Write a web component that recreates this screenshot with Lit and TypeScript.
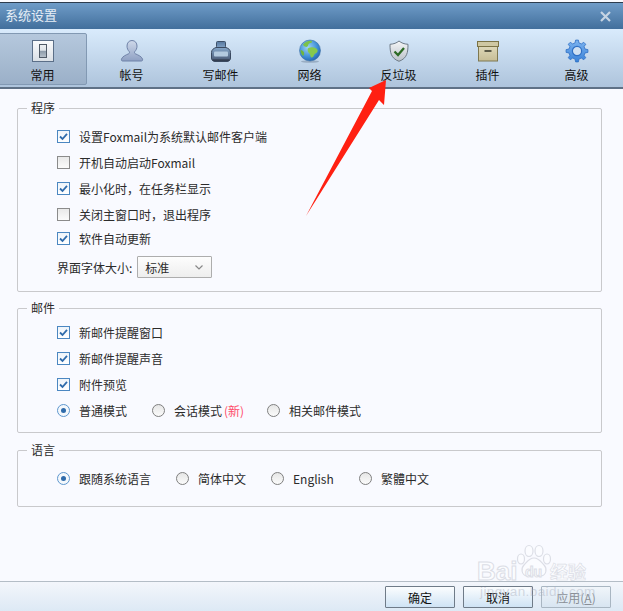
import { LitElement, html, css, svg } from "lit";
import { customElement } from "lit/decorators.js";

function gearPath(cx: number, cy: number, ro: number, ri: number, teeth: number) {
  const pts: string[] = [];
  const step = (Math.PI * 2) / teeth;
  for (let i = 0; i < teeth; i++) {
    const a = i * step - Math.PI / 2;
    const seq: [number, number][] = [
      [a - step * 0.3, ri],
      [a - step * 0.16, ro],
      [a + step * 0.16, ro],
      [a + step * 0.3, ri],
    ];
    for (const [t, r] of seq) pts.push(`${(cx + r * Math.cos(t)).toFixed(2)} ${(cy + r * Math.sin(t)).toFixed(2)}`);
  }
  return "M" + pts.join("L") + "Z";
}

const icons: Record<string, unknown> = {
  general: svg`
    <defs><linearGradient id="g1" x1="0" y1="0" x2="0" y2="1"><stop offset="0" stop-color="#fbfcfd"/><stop offset="1" stop-color="#d9dfe5"/></linearGradient>
    <linearGradient id="g1b" x1="0" y1="0" x2="0" y2="1"><stop offset="0" stop-color="#eef1f3"/><stop offset=".45" stop-color="#dfe4e8"/><stop offset=".5" stop-color="#8b9aa8"/><stop offset="1" stop-color="#b9c3cc"/></linearGradient></defs>
    <rect x="1.5" y="1.5" width="21" height="21" fill="url(#g1)" stroke="#5b6f88"/>
    <rect x="8.5" y="5.5" width="7" height="13" fill="url(#g1b)" stroke="#4f5a66"/>`,
  account: svg`
    <defs><linearGradient id="g2" x1="0" y1="0" x2="0" y2="1"><stop offset="0" stop-color="#cfd9ea"/><stop offset="1" stop-color="#8ea0c3"/></linearGradient></defs>
    <path d="M12 1.500c3.200 0 5 2.500 5 5.600 0 2.300-1 4.300-2.200 5.400-.5.500-.4 1.800.4 2.200 2.800 1.300 6.300 2.600 7.300 5.300.4 1.200-.1 2-1 2H2.500c-.9 0-1.400-.8-1-2 1-2.700 4.500-4 7.300-5.300.8-.4.9-1.700.4-2.200C8 11.400 7 9.400 7 7.100 7 4 8.800 1.500 12 1.500Z" fill="url(#g2)" stroke="#6f82a8"/>`,
  compose: svg`
    <defs><linearGradient id="g3" x1="0" y1="0" x2="0" y2="1"><stop offset="0" stop-color="#86a8cb"/><stop offset="1" stop-color="#45546e"/></linearGradient>
    <linearGradient id="g3b" x1="0" y1="0" x2="0" y2="1"><stop offset="0" stop-color="#55779e"/><stop offset="1" stop-color="#7fa0c4"/></linearGradient></defs>
    <rect x="7.500" y="2.500" width="9" height="6" rx="1" fill="url(#g3b)" stroke="#3d5069"/>
    <path d="M7 8.500h10c2.500 1 4.500 2.200 4.500 5v5.500c0 2-1.500 3.500-3.500 3.500H6c-2 0-3.500-1.500-3.500-3.500v-5.500c0-2.800 2-4 4.500-5Z" fill="url(#g3)" stroke="#3a495f"/>
    <rect x="5" y="12.500" width="14" height="5" rx="1" fill="#b3cadf"/>
    <rect x="3.500" y="20.500" width="17" height="1.200" fill="#2a3342"/>`,
  network: svg`
    <defs><radialGradient id="g4" cx=".4" cy=".35" r=".75"><stop offset="0" stop-color="#9fd4f5"/><stop offset=".6" stop-color="#3f8fd6"/><stop offset="1" stop-color="#1d5aa6"/></radialGradient></defs>
    <ellipse cx="12" cy="22.600" rx="9" ry="1.100" fill="#7f93a9" opacity=".6"/>
    <circle cx="12" cy="11.500" r="10.500" fill="url(#g4)" stroke="#3a6ea5" stroke-width=".6"/>
    <path d="M5 5.500c2-2.500 5-4 8.500-3.700 1 .8.500 2-.8 2.300-1.500.3-2.400 1.100-2.600 2.400-.2 1.200-1.500 1.600-2.500 1.300C6.500 7.500 5.500 7 5 5.500Z" fill="#7cc24a"/>
    <path d="M10.500 9c2-1 5-1 7 0 1.500.8 2.500 2 2 3.500-.5 1.700-2.500 1.700-3.300 3.200-.7 1.400-1.200 3-2.700 2.800-1.200-.2-1-2-1.500-3.200-.5-1.300-2-1.800-2.200-3.300-.2-1.300-.2-2.300.7-3Z" fill="#86c94e"/>
    <path d="M2.500 11c1.500.3 3 1 3.500 2.500.4 1.300 0 2.700-1 3.500-1.500-1.300-2.500-3.500-2.500-6Z" fill="#6fb540"/>`,
  spam: svg`
    <defs><linearGradient id="g5" x1="0" y1="0" x2="0" y2="1"><stop offset="0" stop-color="#f6f7f8"/><stop offset="1" stop-color="#b9c0c8"/></linearGradient></defs>
    <path d="M12 2c2.500 2 5 3 9 3.300 0 8-.8 14-9 17-8.200-3-9-9-9-17C7 5 9.500 4 12 2Z" fill="url(#g5)" stroke="#6e7a86"/>
    <path d="M7.500 12.500 11 16l6-7" fill="none" stroke="#2c6a25" stroke-width="2.300"/>`,
  plugin: svg`
    <defs><linearGradient id="g6" x1="0" y1="0" x2="0" y2="1"><stop offset="0" stop-color="#ded8b8"/><stop offset="1" stop-color="#c6bd96"/></linearGradient></defs>
    <rect x="2.500" y="7.500" width="19" height="14.500" fill="url(#g6)" stroke="#7e7850"/>
    <rect x="1.500" y="2.500" width="21" height="5" fill="#cfc8a2" stroke="#7b7345"/>
    <rect x="8.500" y="11" width="7" height="2" fill="#5b5a48"/>`,
  advanced: svg`
    <defs><linearGradient id="g7" x1="0" y1="0" x2="0" y2="1"><stop offset="0" stop-color="#7db4f0"/><stop offset="1" stop-color="#3a82d8"/></linearGradient></defs>
    <path d="${gearPath(12, 12, 11, 8.3, 8)}" fill="url(#g7)" stroke="#2f6fc4" stroke-width=".8" stroke-linejoin="round"/>
    <circle cx="12" cy="12" r="4.600" fill="#cfe0f2" stroke="#2f6fc4" stroke-width="1.200"/>`,
};

const tabs = [
  ["general", "常用"],
  ["account", "帐号"],
  ["compose", "写邮件"],
  ["network", "网络"],
  ["spam", "反垃圾"],
  ["plugin", "插件"],
  ["advanced", "高级"],
];

@customElement("app-root")
export class AppRoot extends LitElement {
  static styles = css`
    :host {
      display: flex;
      flex-direction: column;
      position: relative;
      width: 623px;
      height: 611px;
      overflow: hidden;
      background: #f9faff;
      font-family: "Noto Sans CJK SC", "Noto Sans", sans-serif;
      font-size: 12px;
      color: #2b2b2b;
    }
    .titlebar {
      flex: none;
      margin-top: 2px;
      border-top: 1px solid #2c3c4e;
      box-sizing: border-box;
      height: 27px;
      background: linear-gradient(#6f9cc8, #426f9c);
      display: flex;
      align-items: center;
      justify-content: space-between;
      padding: 0 12px 3px 5px;
      color: #e6eef6;
      font-size: 13px;
    }
    .close { width: 11px; height: 11px; display: block; margin-top: 4px; }
    .toolbar {
      flex: none;
      height: 60px;
      box-sizing: border-box;
      border-bottom: 2px solid #5f7186;
      background: linear-gradient(#d9ebfc, #aec4dc);
      display: flex;
      margin-left: -2px;
      padding-top: 4px;
    }
    .tab {
      width: 89px;
      height: 52px;
      box-sizing: border-box;
      display: flex;
      flex-direction: column;
      align-items: center;
      padding-top: 5px;
      color: #111;
      border: 1px solid transparent;
      border-radius: 2px;
      line-height: 16px;
    }
    .tab.on {
      background: linear-gradient(#b5c8dd, #9bb0c8);
      border-color: #8299b3;
    }
    .tab svg { width: 24px; height: 24px; display: block; margin-bottom: 4px; }
    main {
      flex: 1;
      padding: 11px 21px 0 17px;
      display: flex;
      flex-direction: column;
    }
    fieldset {
      margin: 0;
      border: 1px solid #c9c9cc;
      border-radius: 2px;
      padding: 0 0 0 39px;
      min-width: 0;
      box-sizing: border-box;
    }
    legend {
      margin-left: -30px;
      padding: 0 4px;
      line-height: 16px;
      color: #2b2b2b;
    }
    .prog { height: 192px; padding-top: 7px; }
    .mail { height: 133px; margin-top: 8px; padding-top: 3px; }
    .lang { height: 65px; margin-top: 9px; padding-top: 7px; }
    .row {
      display: flex;
      align-items: center;
      height: 26px;
    }
    .short { height: 22px; }
    .opt { display: flex; align-items: center; gap: 9px; flex: none; }
    .w95 { width: 95px; }
    .w115 { width: 115px; }
    .w119 { width: 119px; }
    .w88 { width: 88px; }
    .box {
      width: 13px; height: 13px; flex: none; box-sizing: border-box;
      border: 1px solid #8b8b8b;
      background: linear-gradient(#e9e9e9, #fbfbfb);
      display: block;
    }
    .box.on { border-color: #4b87c1; background: linear-gradient(#eef4fa, #fff); }
    .box svg { display: block; width: 11px; height: 11px; }
    .radio {
      width: 13px; height: 13px; flex: none; box-sizing: border-box;
      border-radius: 50%;
      border: 1px solid #7f7f7f;
      background: linear-gradient(#e6e6e6, #fbfbfb);
      display: flex; align-items: center; justify-content: center;
    }
    .radio.on { border-color: #5e97cf; background: #f4f8fc; }
    .radio.on i { width: 5px; height: 5px; border-radius: 50%; background: #2f6bab; display: block; }
    .new { color: #ff4a68; margin-left: 2px; }
    .sizerow { height: 22px; margin-top: 7px; }
    .select {
      margin-left: 5px;
      width: 75px; height: 22px; box-sizing: border-box;
      border: 1px solid #adadad;
      border-radius: 1px;
      background: linear-gradient(#fdfdfd, #eeeeee);
      display: flex; align-items: center; justify-content: space-between;
      padding: 0 8px 0 7px;
    }
    .select svg { width: 8px; height: 5px; display: block; }
    footer {
      flex: none;
      height: 30px;
      box-sizing: border-box;
      border-top: 1px solid #b4bdc6;
      background: linear-gradient(#f3f6fb, #dde9f5);
      display: flex;
      justify-content: flex-end;
      gap: 8px;
      padding: 4px 12px 0 0;
    }
    button {
      width: 70px; height: 22px; padding: 0;
      box-sizing: border-box;
      font: inherit;
      color: #111;
      border: 1px solid #6f7b88;
      border-radius: 1px;
      background: linear-gradient(#fbfdfe, #cfe3f4);
    }
    button:disabled { color: #8a8f96; border-color: #a9b6c2; background: linear-gradient(#f0f5fa, #d8e5f1); }
    .arrow { position: absolute; left: 300px; top: 75px; width: 95px; height: 146px; pointer-events: none; }
    .wm {
      position: absolute; left: 477px; top: 543px; width: 125px; height: 60px;
      pointer-events: none;
      font-family: "Liberation Sans", sans-serif;
      color: #fbfcff;
    }
    .wm svg { position: absolute; left: 38px; top: 1px; width: 38px; height: 36px; }
    .wm .bai, .wm .du, .wm .jy {
      position: absolute; font-weight: 700; -webkit-text-stroke: 1px #dcdee6;
    }
    .wm .bai { left: 0; top: 15px; font-size: 26px; line-height: 26px; }
    .wm .du { left: 48px; top: 22px; font-size: 14px; line-height: 14px; }
    .wm .jy { left: 73px; top: 18px; font-size: 18px; line-height: 20px; font-family: "Noto Sans CJK SC", sans-serif; -webkit-text-stroke: .7px #dcdee6; }
    .wm .url { position: absolute; left: 3px; top: 41px; font-size: 13.5px; line-height: 16px; color: rgba(170, 175, 190, .45); white-space: nowrap; letter-spacing: .4px; }
  `;

  private check(label: string, on: boolean, cls = "") {
    return html`<div class="row ${cls}"><div class="opt">
      <span class="box ${on ? "on" : ""}">${on
        ? html`<svg viewBox="0 0 11 11"><path d="M2 5.500 4.500 8 9 2.800" fill="none" stroke="#2f6bab" stroke-width="1.800"/></svg>`
        : ""}</span><span>${label}</span></div></div>`;
  }

  private radio(label: unknown, on: boolean, cls = "") {
    return html`<div class="opt ${cls}"><span class="radio ${on ? "on" : ""}">${on ? html`<i></i>` : ""}</span><span>${label}</span></div>`;
  }

  render() {
    return html`
      <div class="titlebar">
        <span>系统设置</span>
        <svg class="close" viewBox="0 0 11 11"><path d="M1 1 10 10M10 1 1 10" stroke="#c6d4e3" stroke-width="2.200"/></svg>
      </div>
      <nav class="toolbar">
        ${tabs.map(
          ([id, label], i) => html`<div class="tab ${i === 0 ? "on" : ""}">
            <svg viewBox="0 0 24 24">${icons[id]}</svg><span>${label}</span>
          </div>`
        )}
      </nav>
      <main>
        <fieldset class="prog">
          <legend>程序</legend>
          ${this.check("设置Foxmail为系统默认邮件客户端", true)}
          ${this.check("开机自动启动Foxmail", false)}
          ${this.check("最小化时，在任务栏显示", true)}
          ${this.check("关闭主窗口时，退出程序", false)}
          ${this.check("软件自动更新", true, "short")}
          <div class="row sizerow">
            <span>界面字体大小:</span>
            <div class="select">
              <span>标准</span>
              <svg viewBox="0 0 8 5"><path d="M.5 .5 4 4 7.500 .5" fill="none" stroke="#888" stroke-width="1.200"/></svg>
            </div>
          </div>
        </fieldset>
        <fieldset class="mail">
          <legend>邮件</legend>
          ${this.check("新邮件提醒窗口", true)}
          ${this.check("新邮件提醒声音", true)}
          ${this.check("附件预览", true)}
          <div class="row">
            ${this.radio("普通模式", true, "w95")}
            ${this.radio(html`会话模式<span class="new">(新)</span>`, false, "w115")}
            ${this.radio("相关邮件模式", false)}
          </div>
        </fieldset>
        <fieldset class="lang">
          <legend>语言</legend>
          <div class="row">
            ${this.radio("跟随系统语言", true, "w119")}
            ${this.radio("简体中文", false, "w95")}
            ${this.radio("English", false, "w88")}
            ${this.radio("繁體中文", false)}
          </div>
        </fieldset>
      </main>
      <footer>
        <button>确定</button>
        <button>取消</button>
        <button disabled>应用(<u>A</u>)</button>
      </footer>
      <svg class="arrow" viewBox="300 75 95 146">
        <path d="M306 216 372 91 369 88 386 80 384 105 379 100Z" fill="#ff2012"/>
      </svg>
      <div class="wm">
        <svg viewBox="0 0 38 36" fill="#fbfcff" stroke="#dcdee6" stroke-width="1.200">
          <ellipse cx="6" cy="15" rx="3.500" ry="5"/>
          <ellipse cx="14" cy="7" rx="4" ry="5.500"/>
          <ellipse cx="24" cy="7" rx="4" ry="5.500"/>
          <ellipse cx="32" cy="15" rx="3.500" ry="5"/>
          <path d="M19 14c5 0 7 4 10 7 3 3 3 10-3 11-3 .5-5-1-7-1s-4 1.500-7 1c-6-1-6-8-3-11 3-3 5-7 10-7Z"/>
        </svg>
        <span class="bai">Bai</span><span class="du">du</span><span class="jy">经验</span>
        <span class="url">jingyan.baidu.com</span>
      </div>
    `;
  }
}
